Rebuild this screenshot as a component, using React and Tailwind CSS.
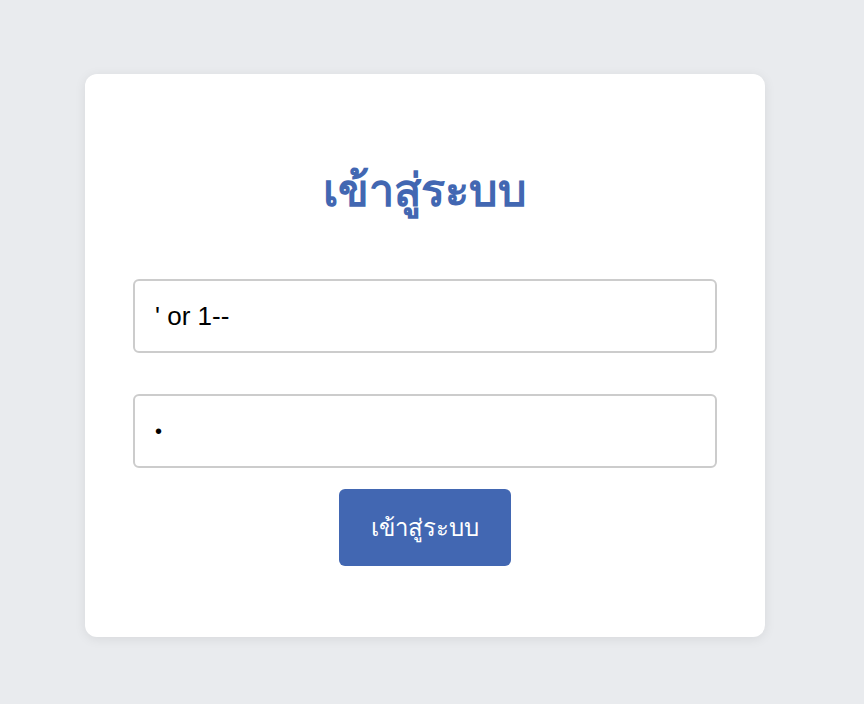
import React, { useState } from 'react';

const App = () => {
    const [username, setUsername] = useState("' or 1--");
    const [password, setPassword] = useState("1");

    return (
        <div className="min-h-[704px] bg-[#e9ebee] pt-[74px] pl-[85px]" style={{ fontFamily: '"Liberation Sans", "Noto Sans", sans-serif' }}>
            <div className="w-[680px] h-[563px] bg-white rounded-xl shadow-[0_2px_12px_rgba(0,0,0,0.08)] px-12 pt-[88px]">
                <h1 className="text-center text-[45px] font-bold text-[#4267b2] leading-[58px]">
                    เข้าสู่ระบบ
                </h1>

                <form className="mt-[59px] flex flex-col" onSubmit={e => e.preventDefault()}>
                    <input
                        type="text"
                        value={username}
                        onChange={e => setUsername(e.target.value)}
                        className="h-[74px] w-full border-2 border-[#cccccc] rounded-md px-5 text-[26px] text-black outline-none"
                    />
                    <input
                        type="password"
                        value={password}
                        onChange={e => setPassword(e.target.value)}
                        className="mt-[41px] h-[74px] w-full border-2 border-[#cccccc] rounded-md px-5 text-[20px] text-black outline-none"
                    />
                    <button
                        type="submit"
                        className="mt-[21px] self-center w-[172px] h-[77px] bg-[#4267b2] text-white text-[24px] font-medium rounded-md"
                    >
                        เข้าสู่ระบบ
                    </button>
                </form>
            </div>
        </div>
    );
};

export default App;
